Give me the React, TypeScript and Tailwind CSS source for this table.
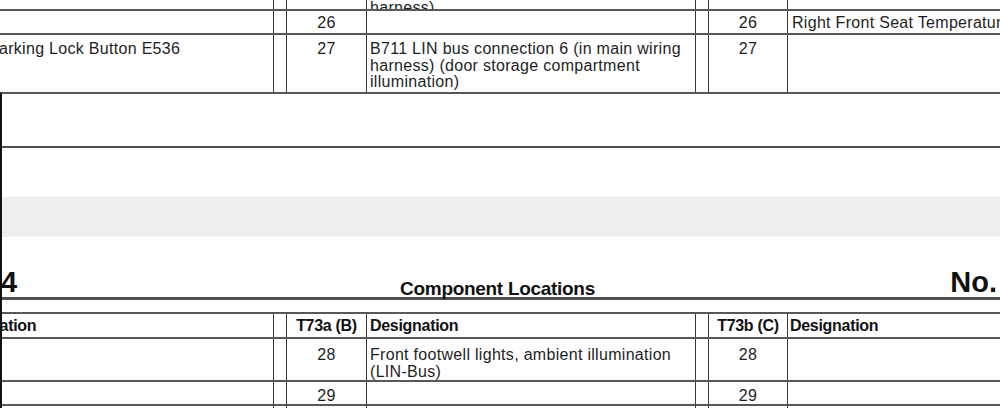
import React from 'react';

type CellProps = { children?: React.ReactNode; className?: string };

// one table cell; every cell but the first draws the vertical rule
const Cell: React.FC<CellProps & { first?: boolean }> = ({ children, className = '', first }) => (
  <div className={`${first ? '' : 'border-l-[1.5px] border-l-[#3a3a3a]'} ${className}`}>{children}</div>
);

const TOP_COLS = 'grid grid-cols-[273px_13px_80px_329px_13px_79px_1fr]';
const LOW_COLS = 'grid grid-cols-[271px_13px_80px_329px_13px_79px_1fr]';

const App: React.FC = () => {
  return (
    <div className="w-[1000px] h-[408px] overflow-hidden bg-white text-[#1e1e1e] text-[16px] leading-[16.5px] tracking-[0.3px] font-['Liberation_Sans',Arial,sans-serif]">
      {/* tail of the previous page's table */}
      <div className={`${TOP_COLS} h-[9px] overflow-hidden`}>
        <Cell first />
        <Cell />
        <Cell />
        <Cell className="flex items-end pl-[3px] pb-[3px]">
          <span className="whitespace-nowrap">harness)</span>
        </Cell>
        <Cell />
        <Cell />
        <Cell />
      </div>

      <div className={`${TOP_COLS} h-[24px] border-t-2 border-t-[#585858]`}>
        <Cell first />
        <Cell />
        <Cell className="pt-[4px] text-center">26</Cell>
        <Cell />
        <Cell />
        <Cell className="pt-[4px] text-center">26</Cell>
        <Cell className="pt-[4px] pl-[4px] whitespace-nowrap">Right Front Seat Temperature Sensor</Cell>
      </div>

      <div className={`${TOP_COLS} h-[59px] border-t-2 border-t-[#585858]`}>
        <Cell first className="pt-[6px] whitespace-nowrap">
          <span className="-ml-[12px]">Parking Lock Button E536</span>
        </Cell>
        <Cell />
        <Cell className="pt-[6px] text-center">27</Cell>
        <Cell className="pt-[6px] pl-[3px]">
          <div className="whitespace-nowrap">B711 LIN bus connection 6 (in main wiring</div>
          <div className="whitespace-nowrap">harness) (door storage compartment</div>
          <div className="whitespace-nowrap">illumination)</div>
        </Cell>
        <Cell />
        <Cell className="pt-[6px] text-center">27</Cell>
        <Cell />
      </div>

      {/* page bottom, gap between pages, next page */}
      <div className="border-t-2 border-t-[#585858] border-l-2 border-l-[#111]">
        <div className="h-[52px]" />
        <div className="border-t-2 border-t-[#4e4e4e] h-[51px]" />
        <div className="h-[40px] bg-[#eceef0]" />

        <div className="h-[63px] border-b-[3px] border-b-[#505050] grid grid-cols-[1fr_auto_1fr] items-end text-[#111] tracking-normal">
          <div className="text-[29px] leading-none font-bold -ml-[1px]">4</div>
          <div className="text-[19px] leading-none font-bold tracking-[-0.3px] -ml-[7px] mb-[-1px]">Component Locations</div>
          <div className="text-[29px] leading-none font-bold justify-self-end pr-[3px]">No.</div>
        </div>

        <div className="h-[12px]" />

        <div className={`${LOW_COLS} h-[25px] border-t-2 border-t-[#585858] font-bold text-[#111] tracking-[-0.3px]`}>
          <Cell first className="pt-[4px] whitespace-nowrap">
            <span className="-ml-[54px]">Designation</span>
          </Cell>
          <Cell />
          <Cell className="pt-[4px] text-center whitespace-nowrap">T73a (B)</Cell>
          <Cell className="pt-[4px] pl-[3px]">Designation</Cell>
          <Cell />
          <Cell className="pt-[4px] text-center whitespace-nowrap">T73b (C)</Cell>
          <Cell className="pt-[4px] pl-[2px]">Designation</Cell>
        </div>

        <div className={`${LOW_COLS} h-[43px] border-t-2 border-t-[#585858]`}>
          <Cell first />
          <Cell />
          <Cell className="pt-[8px] text-center">28</Cell>
          <Cell className="pt-[8px] pl-[3px]">
            <div className="whitespace-nowrap">Front footwell lights, ambient illumination</div>
            <div className="whitespace-nowrap">(LIN-Bus)</div>
          </Cell>
          <Cell />
          <Cell className="pt-[8px] text-center">28</Cell>
          <Cell />
        </div>

        <div className={`${LOW_COLS} h-[24px] border-t-2 border-t-[#585858]`}>
          <Cell first />
          <Cell />
          <Cell className="pt-[6px] text-center">29</Cell>
          <Cell />
          <Cell />
          <Cell className="pt-[6px] text-center">29</Cell>
          <Cell />
        </div>

        <div className={`${LOW_COLS} h-[20px] border-t-2 border-t-[#585858]`}>
          <Cell first />
          <Cell />
          <Cell />
          <Cell />
          <Cell />
          <Cell />
          <Cell />
        </div>
      </div>
    </div>
  );
};

export default App;
